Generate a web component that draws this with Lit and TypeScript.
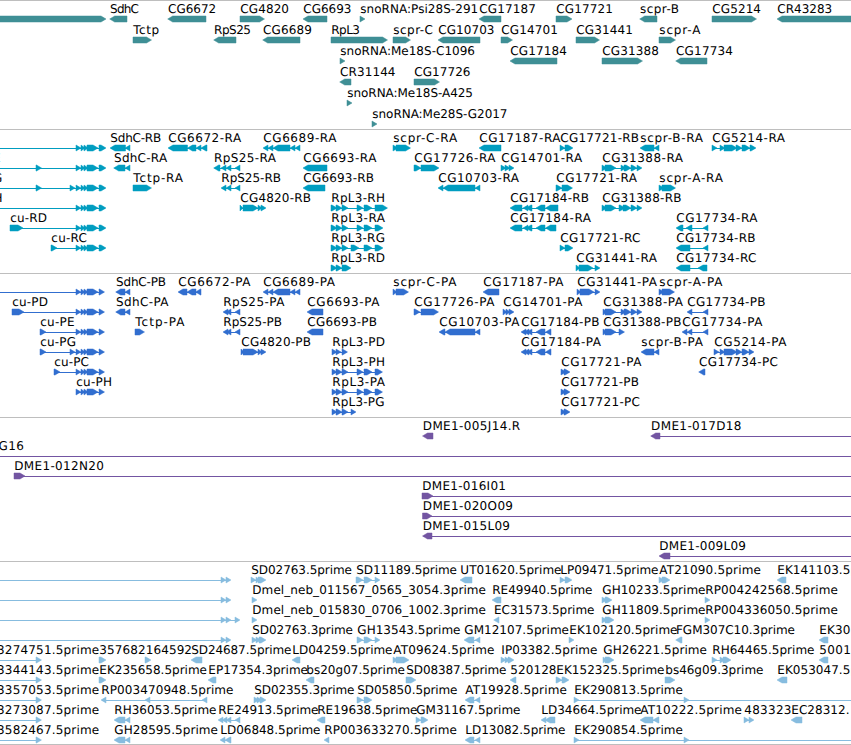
import {css, html, LitElement, svg} from 'lit';
import {customElement, property} from 'lit/decorators.js';

// label, glyph, right edge of the label, left edge (default: glyph start)
// A glyph is a direction sign followed by start:end blocks; blocks are joined by a line.
type Feature = [string, string, number?, number?];

interface Track {
  name: string;
  pitch: number;
  height: number;
  rows: Feature[][];
}

const CU_EXONS = '76:81 81:85 84:88 87:98';
const CU_R = `${CU_EXONS} 99:106`;
const CU_P = `${CU_EXONS} 99:104.5`;
const RPL3_R = '331:337 336:342 342:348';
const RPL3_P = '332:337 336:342 342:348';
const EST_END = '221:226 226:231';

const TRACKS: Track[] = [
  {
    name: 'gene',
    pitch: 21,
    height: 128,
    rows: [
      [
        ['', '>-10:106'],
        ['SdhC', '<109.7:127', 138.5],
        ['CG6672', '<167.7:206', 215.7],
        ['CG4820', '>240:264.5', 288.5],
        ['CG6693', '<303:327', 351],
        ['snoRNA:Psi28S-291', '>360:365', 477.7],
        ['CG17187', '<479:501', 535.5],
        ['CG17721', '>556:572', 612.5],
        ['scpr-B', '<639.7:657', 678.5],
        ['CG5214', '>712:756.5', 760.5],
        ['CR43283', '<777:861', 831.7],
      ],
      [
        ['Tctp', '>133:151.5', 158.5],
        ['RpS25', '<213.7:236', 250.5],
        ['CG6689', '<262.7:300', 311.5],
        ['RpL3', '>331:387.5', 359.5],
        ['scpr-C', '>393:410.5', 432.5],
        ['CG10703', '<438:480', 494],
        ['CG14701', '>501:512.5', 557.5],
        ['CG31441', '>576:599.5', 632.5],
        ['scpr-A', '>659:675.5', 700],
      ],
      [
        ['snoRNA:Me18S-C1096', '>340:345', 474.5],
        ['CG17184', '<510:557', 566.5],
        ['CG31388', '>602:642.5', 658.5],
        ['CG17734', '<675.7:707', 732.5],
      ],
      [
        ['CR31144', '<339.7:351', 395],
        ['CG17726', '>414:439.5', 470],
      ],
      [['snoRNA:Me18S-A425', '>347:352', 472.5]],
      [['snoRNA:Me28S-G2017', '>372:377', 507]],
    ],
  },
  {
    name: 'transcript',
    pitch: 20,
    height: 143,
    rows: [
      [
        ['', `>-20:-10 ${CU_R}`],
        ['SdhC-RB', '<110:125.5 125:130', 160.7],
        ['CG6672-RA', '<168:187.5 187.5:196 196:201 201:207', 240.7],
        ['CG6689-RA', '<263:268 268:273 273:290 290:295 295:300', 336],
        ['scpr-C-RA', '>393:398 396:410.5', 456.7],
        ['CG17187-RA', '<479:501', 560],
        ['CG17721-RB', '>560:565 565:573', 638.5],
        ['scpr-B-RA', '<640:654 654:659', 702.5],
        ['CG5214-RA', '>712:717 720:725 724:737 736:742 742:750 750:756', 784.5],
      ],
      [
        ['E', `>-20:-10 36:41.5 ${CU_R}`, 1, -7],
        ['SdhC-RA', '<113.7:125 125:130', 166.7],
        ['RpS25-RA', '<213.7:220 221:226 226:231 235:240', 275.5],
        ['CG6693-RA', '<303:327', 376],
        ['CG17726-RA', '>414:421 421:439', 495],
        ['CG14701-RA', '>501:506 505:510 509:514', 581.7],
        ['CG31388-RA', '>602:607 605:616 621:626 624:631 631:637 637:642', 682.5],
      ],
      [
        ['G', `>-20:-10 36:41.5 70:75 ${CU_R}`, 2.5, -7],
        ['Tctp-RA', '>133:151.5', 182.5],
        ['RpS25-RB', '<221:226 226:231 235:240', 280.5],
        ['CG6693-RB', '<303:325', 373.5],
        ['CG10703-RA', '<438:443 443:475 475:480', 518.5],
        ['CG17721-RA', '>556:562 562:572.5', 636.5],
        ['scpr-A-RA', '>659:664 662:675.5', 722.5],
      ],
      [
        ['H', `>-20:-10 ${CU_R}`, 2.8, -6.4],
        ['CG4820-RB', '>240:243 243:258 258:262 261:266', 310.5],
        ['RpL3-RH', `>${RPL3_R} 357:363 364:372 375:387.5`, 384.5],
        ['CG17184-RB', '<510:522 523:528 526:532 536:545 545.5:558', 588.5],
        ['CG31388-RB', '>602:607 605:616 619:625 623:631 631:637 637:642', 681],
      ],
      [
        ['cu-RD', `>10:23 ${CU_R}`, 46.5],
        ['RpL3-RA', `>${RPL3_R} 357:363 364:372 375:383`, 384.5],
        ['CG17184-RA', '<510:522 523:528 526:532 536:545 545.5:556', 590.5],
        ['CG17734-RA', '<676:683 686:692 703:708', 757],
      ],
      [
        ['cu-RC', `>51:57 ${CU_R}`, 86.5],
        ['RpL3-RG', `>${RPL3_R} 351:359 364:372 375:383`, 384.5],
        ['CG17721-RC', '>560:565 565:573', 640],
        ['CG17734-RB', '<676:690 703:708', 755],
      ],
      [
        ['RpL3-RD', '>331:337 336:342 342:351', 384.5],
        ['CG31441-RA', '>576:580 579:593 595:600', 656.5],
        ['CG17734-RC', '<676:690 698:707', 756],
      ],
    ],
  },
  {
    name: 'protein',
    pitch: 20,
    height: 143,
    rows: [
      [
        ['', `>-20:-10 ${CU_P}`],
        ['SdhC-PB', '<115.7:125 125:130', 165.5],
        ['CG6672-PA', '<178:187 187:196 195.5:201', 250],
        ['CG6689-PA', '<263:268 268:273 273:290 290:295 295:300', 334.5],
        ['scpr-C-PA', '>393:397 396:408.5', 456],
        ['CG17187-PA', '<483:499', 563],
        ['CG31441-PA', '>577:581 580:594 595:600', 656.5],
        ['scpr-A-PA', '>659:664 662:674.5', 722],
      ],
      [
        ['cu-PD', `>12:24 ${CU_P}`, 47.5],
        ['SdhC-PA', '<115.7:125 125:130', 168],
        ['RpS25-PA', '<223:228 226:231 235:240', 284],
        ['CG6693-PA', '<307:323', 379],
        ['CG17726-PA', '>414:420 421:438.5', 494],
        ['CG14701-PA', '>503:507 506:510 509:514', 582],
        ['CG31388-PA', '>603:607 605:616 621:626 624:631 631:637 637:642', 682.5],
        ['CG17734-PB', '<687:692 703:708', 765],
      ],
      [
        ['cu-PE', `>40:46 ${CU_P}`, 74],
        ['Tctp-PA', '>135:144.5', 184],
        ['RpS25-PB', '<223:228 226:231 235:240', 281.5],
        ['CG6693-PB', '<307:323', 376.5],
        ['CG10703-PA', '<439:445 445:475 475:480', 519],
        ['CG17184-PB', '<521:526 524:529 527:532 536:545 545.5:551', 599],
        ['CG31388-PB', '>603:607 605:616 619:624.5', 681],
        ['CG17734-PA', '<682:687 687:692 703:708', 762],
      ],
      [
        ['cu-PG', `>40:46 70:75 ${CU_P}`, 75.5],
        ['CG4820-PB', '>241:244 243:258 258:262 261:266', 310.5],
        ['RpL3-PD', '>332:337 336:341 342:347.5', 384.5],
        ['CG17184-PA', '<521:526 524:529 527:532 536:545 545.5:551', 600.5],
        ['scpr-B-PA', '<641:654 654:659', 702.5],
        ['CG5214-PA', '>714:719 720:725 724:737 736:742 742:749 749:754', 786],
      ],
      [
        ['cu-PC', `>54:60 ${CU_P}`, 88.5],
        ['RpL3-PH', `>${RPL3_P} 357:363 364:372 375:382.5`, 384.5],
        ['CG17721-PA', '>561:566 564:570', 641],
        ['CG17734-PC', '<698.7:705', 777.5],
      ],
      [
        ['cu-PH', `>${CU_P}`, 111.5],
        ['RpL3-PA', `>${RPL3_P} 357:363 364:372 375:382.5`, 384.5],
        ['CG17721-PB', '>561:566 564:570', 638.5],
      ],
      [
        ['RpL3-PG', `>${RPL3_P} 351:356`, 384],
        ['CG17721-PC', '>561:566 564:570', 639.5],
      ],
    ],
  },
  {
    name: 'clone',
    pitch: 20,
    height: 143,
    rows: [
      [
        ['DME1-005J14.R', '<422.5:433', 519.7],
        ['DME1-017D18', '<650.7:660 861:871', 741],
      ],
      [['G16', '>-20:-10 861:871', 23.5, -1.5]],
      [['DME1-012N20', '>14:25 861:871', 103.3]],
      [['DME1-016I01', '>422:433 861:871', 505.5]],
      [['DME1-020O09', '>422.5:432 861:871', 512.5]],
      [['DME1-015L09', '<422.5:432 861:871', 509.5]],
      [['DME1-009L09', '<659:670 861:871', 745.5]],
    ],
  },
  {
    name: 'est',
    pitch: 20,
    height: 182,
    rows: [
      [
        ['', `>-20:-10 ${EST_END}`],
        ['SD02763.5prime', '>251:256 256:260 258:266', 351.5],
        ['SD11189.5prime', '>356:363 364:372 375:380', 456.5],
        ['UT01620.5prime', '<460:472', 561],
        ['LP09471.5prime', '>560:565 565:572', 658],
        ['AT21090.5prime', '>659:664 662:670', 760.5],
        ['EK141103.5prime', '<777:786', 885],
      ],
      [
        ['', `>-20:-10 ${EST_END}`],
        ['Dmel_neb_011567_0565_3054.3prime', '>252:257', 485.5],
        ['RE49940.5prime', '<492:501', 592],
        ['GH10233.5prime', '>602:607 605:612', 705],
        ['RP004242568.5prime', '>705:710', 837.5],
      ],
      [
        ['', `>-20:-10 ${EST_END} 235:240`],
        ['Dmel_neb_015830_0706_1002.3prime', '>252:257', 485.5],
        ['EC31573.5prime', '<493.7:499', 594],
        ['GH11809.5prime', '>602:607 605:614', 705],
        ['RP004336050.5prime', '>705:710', 837.5],
      ],
      [
        ['', `>-20:-10 ${EST_END}`],
        ['SD02763.3prime', '>252:257 256:261 259:266', 352.5],
        ['GH13543.5prime', '>357:363 364:372 375:380', 460],
        ['GM12107.5prime', '<464:474 475:480', 568.5],
        ['EK102120.5prime', '>569:574', 677],
        ['FGM307C10.3prime', '<675.7:682', 794.5],
        ['EK30', '<819:828', 850],
      ],
      [
        ['3274751.5prime', '>-20:-10 36:41.5', 98.7, -3],
        ['357682164592', '>99:106', 191.5],
        ['', '>145:151'],
        ['SD24687.5prime', '<191:202', 291],
        ['LD04259.5prime', '<292:300', 392],
        ['AT09624.5prime', '>393:398 396:409', 494],
        ['IP03382.5prime', '>501:506 505:510 508:514', 597],
        ['GH26221.5prime', '>603:607 605:614', 706.5],
        ['RH64465.5prime', '>712:717 720:725 723:731', 814],
        ['5001', '<819:828', 850.5],
      ],
      [
        ['3344143.5prime', '>-20:-10 36:41.5', 98.7, -3],
        ['EK235658.5prime', '>99:106', 206.5],
        ['EP17354.3prime', '<208:216', 307.5],
        ['bs20g07.5prime', '<306:314', 404.5],
        ['SD08387.5prime', '>406:416', 506],
        ['520128', '<510:516', 556],
        ['EK152325.5prime', '>556:562 562:569', 664],
        ['bs46g09.3prime', '>665:675', 763],
        ['EK053047.5prime', '<777:787', 885],
      ],
      [
        ['3357053.5prime', '>-20:-10 36:41.5', 98.7, -3],
        ['RP003470948.5prime', '<101:106 145:150 202:207', 233],
        ['SD02355.3prime', '>254:259 257:262 260:266', 354],
        ['SD05850.5prime', '>357:363 364:372', 457],
        ['AT19928.5prime', '<465:474 475:480', 566.5],
        ['EK290813.5prime', '>574:579 684:689 861:871', 682.5],
      ],
      [
        ['3273087.5prime', '>-20:-10 36:41.5', 98.7, -3],
        ['RH36053.5prime', '<114:125 125:130', 216],
        ['RE24913.5prime', '<218:223 222:227 226:231 235:240', 318],
        ['RE19638.5prime', '<317:325', 417],
        ['GM31167.5prime', '>416:421 421:428', 520],
        ['LD34664.5prime', '<541:546 545:555', 641],
        ['AT10222.5prime', '<640:653 653:659', 741.5],
        ['483323', '>744:749 749:754', 791],
        ['EC28312.', '<791:802', 849],
      ],
      [
        ['3582467.5prime', '>-20:-10 36:41.5', 98.7, -3],
        ['GH28595.5prime', '<114:125 125:130', 217.5],
        ['LD06848.5prime', '<220:225 225:231', 320],
        ['RP003633270.5prime', '<324:329', 456.5],
        ['LD13082.5prime', '<465:474 475:480', 565],
        ['EK290854.5prime', '>574:579 684:689 861:871', 682.5],
      ],
    ],
  },
];

const TOP = 15;
const MID = 18;
const BOTTOM = 21;

@customElement('feature-track')
export class FeatureTrack extends LitElement {
  @property({attribute: false}) track!: Track;

  private block(start: number, end: number, forward: boolean) {
    const tip = Math.min(5, end - start);
    const head = forward ? end : start;
    const tail = forward ? start : end;
    const neck = forward ? end - tip : start + tip;
    return svg`
      <polygon
        points="${tail},${TOP} ${neck},${TOP} ${head},${MID} ${neck},${BOTTOM} ${tail},${BOTTOM}"
      />
    `;
  }

  private feature([label, glyph, right = 0, left]: Feature) {
    const forward = glyph[0] === '>';
    const blocks = glyph
      .slice(1)
      .split(' ')
      .map((b) => b.split(':').map(Number));
    const start = blocks[0][0];
    const end = blocks[blocks.length - 1][1];
    const x = left ?? start + 0.3;
    return svg`
      ${
        blocks.length > 1
          ? svg`<rect x=${start + 1} y=${MID} width=${end - start - 2} height="1" />`
          : ''
      }
      ${blocks.map(([a, b]) => this.block(a, b, forward))}
      ${
        label
          ? svg`<text x=${x} y="12" textLength=${right - x + 0.5}>${label}</text>`
          : ''
      }
    `;
  }

  render() {
    const {name, pitch, height, rows} = this.track;
    return html`
      <div class="track ${name}" style="height: ${height}px">
        ${rows.map(
          (row) => html`
            <svg class="row" height=${pitch}>
              ${row.map((f) => this.feature(f))}
            </svg>
          `
        )}
      </div>
    `;
  }

  static styles = css`
    :host {
      display: block;
    }

    .track {
      display: flex;
      flex-direction: column;
      border-top: 1px solid #bebebe;
      overflow: hidden;
    }

    .row {
      display: block;
      flex: none;
      width: 100%;
      overflow: visible;
    }

    polygon {
      stroke: currentColor;
      stroke-width: 0.5px;
      stroke-linejoin: round;
    }

    rect,
    polygon {
      fill: currentColor;
    }

    text {
      fill: #000;
      font-family: 'DejaVu Sans', sans-serif;
      font-size: 12px;
      text-rendering: geometricPrecision;
    }

    .gene {
      color: #3f8f95;
    }

    .transcript {
      color: #009dc0;
    }

    .protein {
      color: #316ecf;
    }

    .clone {
      color: #7355a2;
    }

    .est {
      color: #87bcdf;
    }
  `;
}

@customElement('app-root')
export class AppRoot extends LitElement {
  render() {
    return html`
      <div class="viewer">
        ${TRACKS.map((t) => html`<feature-track .track=${t}></feature-track>`)}
      </div>
    `;
  }

  static styles = css`
    :host {
      display: block;
    }

    .viewer {
      display: flex;
      flex-direction: column;
      height: 744px;
      overflow: hidden;
      background: #fff;
      border-bottom: 1px solid #bebebe;
    }
  `;
}
